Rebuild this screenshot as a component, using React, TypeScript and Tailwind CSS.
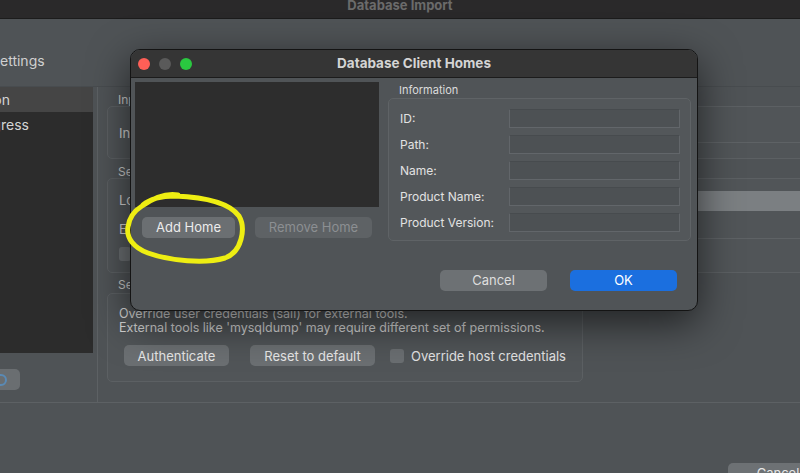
import React from "react";

const font = "font-['Inter','Liberation_Sans',sans-serif]";

function Btn({ children, className = "" }: { children?: React.ReactNode; className?: string }) {
  return (
    <div
      className={`flex h-[21px] shrink-0 items-center justify-center rounded-[5px] text-[13px] ${className}`}
    >
      {children}
    </div>
  );
}

function Field({ className = "" }: { className?: string }) {
  return <div className={`h-[19px] flex-1 border border-[#62666a] border-t-[#474b4e] bg-[#4d5154] ${className}`} />;
}

function Lights() {
  return (
    <div className="flex items-center gap-[9px] pl-[7px]">
      <span className="h-[12px] w-[12px] rounded-full bg-[#fe5f57]" />
      <span className="h-[12px] w-[12px] rounded-full bg-[#5a5a5a]" />
      <span className="h-[12px] w-[12px] rounded-full bg-[#2ac840]" />
    </div>
  );
}

function ClientHomesDialog() {
  const rows = ["ID:", "Path:", "Name:", "Product Name:", "Product Version:"];
  return (
    <div className="absolute left-[130px] top-[49px] flex h-[262px] w-[568px] flex-col overflow-hidden rounded-[10px] border border-[#141414] bg-[#505457] shadow-[0_12px_40px_rgba(0,0,0,0.6)]">
      <div className="grid h-[28px] grid-cols-[1fr_auto_1fr] items-center border-b border-[#1c1c1c] bg-[#353535]">
        <Lights />
        <span className="text-[13.5px] font-bold text-[#d4d4d4]">Database Client Homes</span>
        <span />
      </div>
      <div className="flex flex-col pl-[4px] pt-[4px]">
        <div className="flex gap-[9px]">
          <div className="flex w-[244px] flex-col">
            <div className="h-[125px] bg-[#2d2d2d]" />
            <div className="mt-[10px] flex gap-[20px] pl-[7px]">
              <Btn className="w-[93px] bg-[#6b6f72] text-[#ececec]">Add Home</Btn>
              <Btn className="w-[117px] bg-[#5e6265] text-[#8c8f92]">Remove Home</Btn>
            </div>
          </div>
          <div className="flex w-[303px] flex-col">
            <span className="pl-[11px] pt-[1px] text-[11px] leading-[14px] text-[#dcdcdc]">Information</span>
            <div className="mt-[1px] flex h-[143px] flex-col gap-[7px] rounded-[5px] border border-[#5f6366] bg-[#53575a] pl-[11px] pr-[10px] pt-[10px]">
              {rows.map((r) => (
                <div key={r} className="flex items-center">
                  <span className="w-[109px] text-[12px] text-[#e2e2e2]">{r}</span>
                  <Field />
                </div>
              ))}
            </div>
          </div>
        </div>
        <div className="mt-[29px] flex justify-end gap-[23px] pr-[20px]">
          <Btn className="w-[107px] bg-[#6d7174] text-[#dedede]">Cancel</Btn>
          <Btn className="w-[107px] bg-[#1b6fdf] text-white">OK</Btn>
        </div>
      </div>
    </div>
  );
}

export default function App() {
  return (
    <div className={`relative h-[473px] w-[800px] overflow-hidden bg-[#4f5356] ${font}`}>
      {/* import window behind */}
      <div className="h-[19px] border-b border-[#1c1c1c] bg-[#2a292a] text-center text-[13px] font-bold leading-[10px] text-[#6b6b6b]">
        Database Import
      </div>
      <div className="flex h-[68px] items-end border-b border-[#484c4f] pb-[17px]">
        <span className="-ml-[9px] text-[14px] leading-[17px] text-[#d0d0d0]">Settings</span>
      </div>
      <div className="-ml-[100px] flex h-[316px] border-b border-[#5d6164]">
        <div className="flex w-[193px] shrink-0 flex-col">
          <div className="h-[266px] bg-[#2c2c2c] text-[14px] text-[#d4d4d4]">
            <div className="h-[25px] bg-[#454545] pl-[34px] leading-[25px]">Connection</div>
            <div className="h-[25px] pl-[70px] leading-[25px]">Progress</div>
          </div>
          <Btn className="ml-[40px] mt-[16px] w-[80px] justify-end bg-[#6a6e71] pr-[13px]">
            <span className="h-[12px] w-[12px] rounded-full border-2 border-[#5a8ab5]" />
          </Btn>
        </div>
        <div className="ml-[4px] w-px bg-[#5d6164]" />
        <div className="flex flex-1 flex-col pl-[9px] pt-[6px] text-[#d0d0d0]">
          <span className="pl-[11px] text-[12px] leading-[13px] text-[#c8c8c8]">Input</span>
          <div className="-mr-[20px] h-[53px] rounded-[5px] border border-[#5c6063] bg-[#515558] pl-[11px] pt-[17px]">
            <div className="flex items-center text-[13px]">
              <span className="w-[130px]">Input file:</span>
              <div className="h-[18px] flex-1 border-b border-[#5e6265]" />
            </div>
          </div>
          <span className="mt-[6px] pl-[11px] text-[12px] leading-[13px] text-[#c8c8c8]">Settings</span>
          <div className="-mr-[20px] flex h-[95px] flex-col rounded-[5px] border border-[#5c6063] bg-[#515558] pl-[11px] pt-[12px] text-[13px]">
            <div className="flex h-[20px] items-center">
              <span className="w-[160px]">Local client:</span>
              <div className="h-[20px] flex-1 bg-[#7b7f82]" />
            </div>
            <div className="mt-[10px] flex h-[18px] items-center">
              <span className="w-[160px]">Extra command args:</span>
              <div className="h-[18px] flex-1 border-b border-[#5e6265]" />
            </div>
            <span className="mt-[8px] h-[14px] w-[12px] rounded-[3px] bg-[#6a6e71]" />
          </div>
          <span className="mt-[5px] pl-[11px] text-[12px] leading-[13px] text-[#c8c8c8]">Security</span>
          <div className="mt-[2px] flex h-[89px] w-[476px] flex-col rounded-[5px] border border-[#5c6063] bg-[#515558] pl-[11px] pt-[13px] text-[12.5px] leading-[14px] text-[#d6d6d6]">
            <span>Override user credentials (sail) for external tools.</span>
            <span>External tools like 'mysqldump' may require different set of permissions.</span>
            <div className="ml-[5px] mt-[10px] flex items-center text-[13px]">
              <Btn className="w-[105px] bg-[#6b6f72] text-[#e6e6e6]">Authenticate</Btn>
              <Btn className="ml-[21px] w-[125px] bg-[#6b6f72] text-[#e6e6e6]">Reset to default</Btn>
              <span className="ml-[15px] h-[14px] w-[14px] rounded-[3px] bg-[#6a6e71]" />
              <span className="ml-[7px] text-[#e2e2e2]">Override host credentials</span>
            </div>
          </div>
        </div>
      </div>
      <div className="flex justify-end">
        <Btn className="-mr-[28px] mt-[60px] w-[100px] bg-[#6d7174] text-[#e6e6e6]">Cancel</Btn>
      </div>

      <ClientHomesDialog />

      {/* hand-drawn highlight */}
      <svg className="pointer-events-none absolute inset-0" width="800" height="473" viewBox="0 0 800 473">
        <path
          d="M 143 205 C 150 199, 162 196, 175 196 C 200 197, 228 201, 239 216 C 246 228, 242 252, 225 258 C 205 264, 170 261, 148 253 C 134 248, 126 238, 128 227 C 129 218, 134 211, 142 206 C 152 199, 166 193, 178 195"
          fill="none"
          stroke="#eeee12"
          strokeWidth="5"
          strokeLinecap="round"
          strokeLinejoin="round"
        />
      </svg>
    </div>
  );
}
